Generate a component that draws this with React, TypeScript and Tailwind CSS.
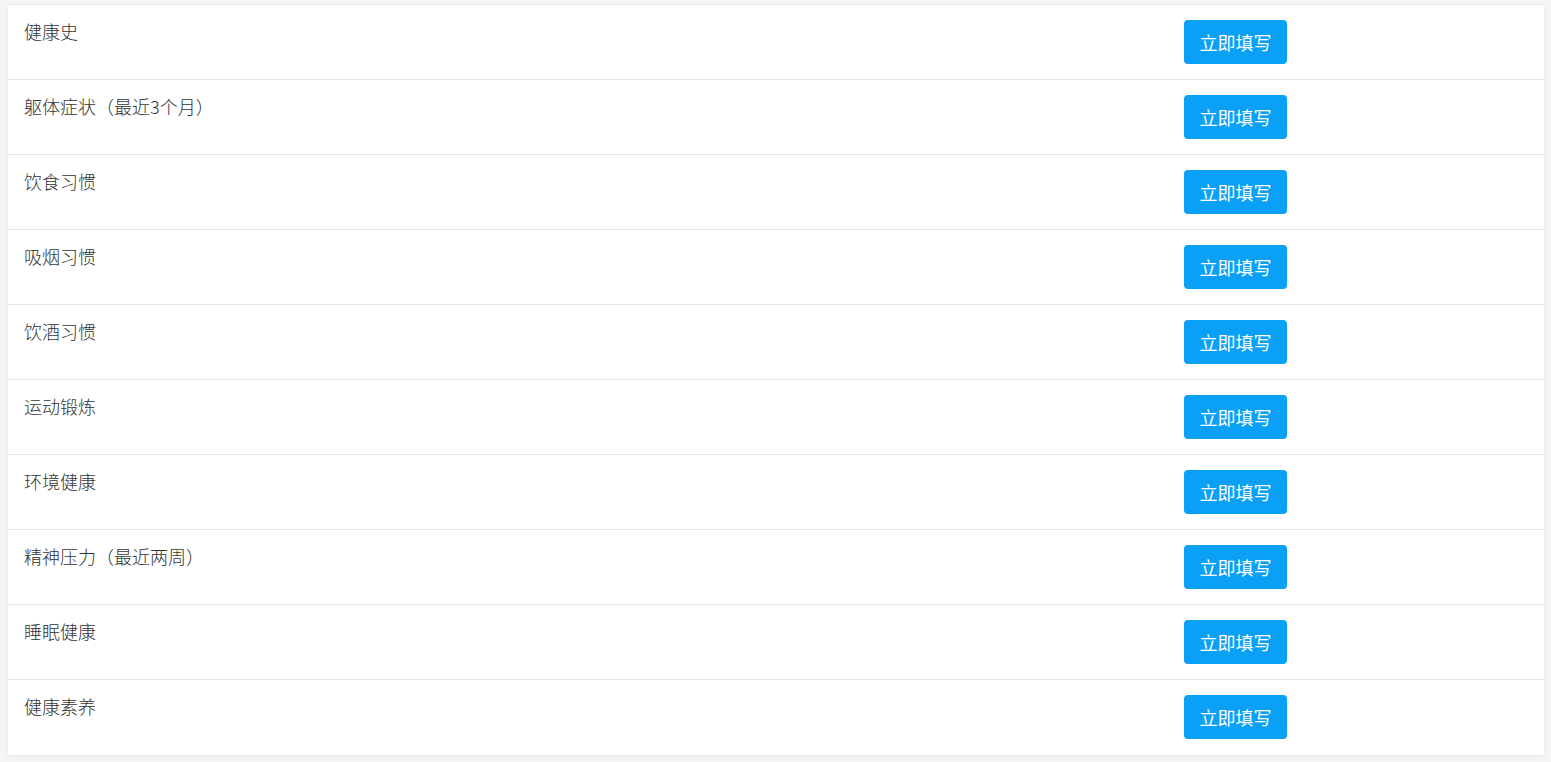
const items = [
  "健康史",
  "躯体症状（最近3个月）",
  "饮食习惯",
  "吸烟习惯",
  "饮酒习惯",
  "运动锻炼",
  "环境健康",
  "精神压力（最近两周）",
  "睡眠健康",
  "健康素养",
];

export default function App() {
  return (
    <div
      className="min-h-[762px] bg-[#f5f5f5] pt-1 pl-2 pr-[7px]"
      style={{ fontFamily: '"Noto Sans CJK SC", "Noto Sans", sans-serif' }}
    >
      <div className="bg-white border-t border-[#e5e5e5] shadow-[0_1px_3px_rgba(0,0,0,0.08)]">
        {items.map((name, i) => (
          <div
            key={name}
            className={
              "flex h-[75px] " +
              (i < items.length - 1 ? "border-b border-[#e6e6e6]" : "")
            }
          >
            <div className="flex-1 pl-4 pt-[14px] text-[18px] leading-6 font-light text-[#333]">
              {name}
            </div>
            <div className="w-[360px] pt-[15px]">
              <button className="w-[103px] h-[44px] rounded bg-[#0aa0f6] text-white text-[18px] leading-none">
                立即填写
              </button>
            </div>
          </div>
        ))}
      </div>
    </div>
  );
}
